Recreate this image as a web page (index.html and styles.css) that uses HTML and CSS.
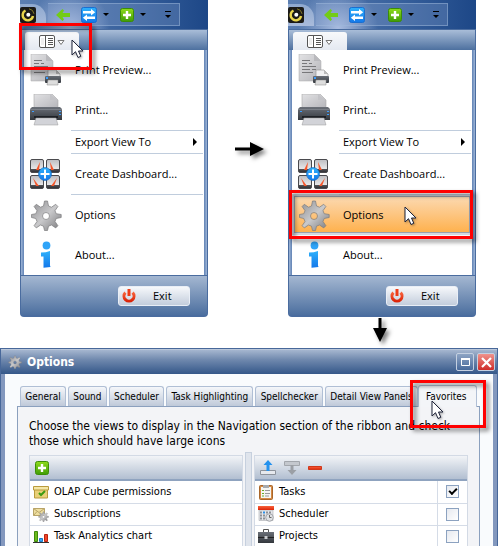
FILE: index.html
```html
<!DOCTYPE html>
<html lang="en">
<head>
  <meta charset="UTF-8">
  <meta name="viewport" content="width=device-width, initial-scale=1.0">
  <title>Options - Favorites</title>
  <link rel="stylesheet" href="styles.css">
</head>
<body>
  <svg class="sprite" aria-hidden="true">
    <defs>
      <linearGradient id="gPaper" x1="0" y1="0" x2="1" y2="1"><stop offset="0" stop-color="#e2e2e4"/><stop offset="1" stop-color="#b4b4b9"/></linearGradient>
      <linearGradient id="gDark" x1="0" y1="0" x2="0" y2="1"><stop offset="0" stop-color="#6b7078"/><stop offset="1" stop-color="#33373d"/></linearGradient>
      <linearGradient id="gGear" x1="0" y1="0" x2="1" y2="1"><stop offset="0" stop-color="#8e8e91"/><stop offset=".5" stop-color="#c9c9cb"/><stop offset="1" stop-color="#77777a"/></linearGradient>
      <linearGradient id="gBlue" x1="0" y1="0" x2="0" y2="1"><stop offset="0" stop-color="#2fb1fb"/><stop offset="1" stop-color="#1478ea"/></linearGradient>
      <linearGradient id="gGreen" x1="0" y1="0" x2="0" y2="1"><stop offset="0" stop-color="#8fdc1c"/><stop offset="1" stop-color="#3f9c06"/></linearGradient>
      <linearGradient id="gRed" x1="0" y1="0" x2="0" y2="1"><stop offset="0" stop-color="#f8633c"/><stop offset="1" stop-color="#dc2408"/></linearGradient>
      <linearGradient id="gTile" x1="0" y1="0" x2="0" y2="1"><stop offset="0" stop-color="#bdbdc1"/><stop offset=".7" stop-color="#e6e6e8"/><stop offset=".72" stop-color="#55555a"/><stop offset="1" stop-color="#2c2c30"/></linearGradient>
    </defs>
    <symbol id="logo" viewBox="0 0 16 16">
      <rect width="16" height="16" rx="2" fill="#1b1a17"/>
      <path d="M5.500 3.500A5.200 5.200 0 1 0 13 9" fill="none" stroke="#e8d44a" stroke-width="2.400"/>
      <circle cx="8.300" cy="7.800" r="2" fill="#fff"/>
      <path d="M9 1.800a6 6 0 0 1 5 5" fill="none" stroke="#857a2a" stroke-width="1"/>
    </symbol>
    <symbol id="back" viewBox="0 0 14 12">
      <path d="M0 6 6.500 0l1.500 1.500L6.500 4H14v4H6.500L8 10.500 6.500 12z" fill="#72cc16"/>
    </symbol>
    <symbol id="refresh" viewBox="0 0 16 16">
      <rect x=".5" y=".5" width="15" height="15" rx="2" fill="url(#gBlue)" stroke="#1a6fd0"/>
      <path d="M2 4h8V2l4.200 3.300L10 8.500V6.500H2zM14 9.500H6V7.500L1.800 10.800 6 14v-2h8z" fill="#fff"/>
    </symbol>
    <symbol id="plus" viewBox="0 0 14 14">
      <rect x=".5" y=".5" width="13" height="13" rx="2" fill="url(#gGreen)" stroke="#3c8d08"/>
      <path d="M5.800 3h2.400v2.800H11v2.400H8.200V11H5.800V8.200H3V5.800h2.800z" fill="#fff"/>
    </symbol>
    <symbol id="view" viewBox="0 0 26 13">
      <rect x=".5" y=".5" width="15" height="12" rx="1.500" fill="#fff" stroke="#555"/>
      <path d="M6.500 1v11" stroke="#555"/>
      <path d="M9 3.500h5M9 5.500h5M9 7.500h5M9 9.500h5" stroke="#555"/>
      <path d="M2 3h3v7H2z" fill="#eee"/>
      <path d="M19 5.500h6L22 9.500z" fill="#fff" stroke="#777"/>
    </symbol>
    <symbol id="preview" viewBox="0 0 32 32">
      <path d="M1 0h15l7 7v20H1z" fill="url(#gPaper)" stroke="#aaa" stroke-width=".5"/>
      <path d="M16 0v7h7z" fill="#b9b9bd"/>
      <path d="M4 6.500h8M4 9.500h5m2 0h3M4 12.500h14M4 15.500h8m2 0h4M4 18.500h11" stroke="#77777a"/>
      <path d="M18 16h8l4 4v5H18z" fill="#f1f1f2" stroke="#999" stroke-width=".7"/>
      <path d="M26 16v4h4z" fill="#bbb"/>
      <rect x="15" y="22" width="16" height="7" rx="1" fill="url(#gDark)"/>
      <path d="M16 24h2" stroke="#3d9eff" stroke-width="2"/>
      <path d="M18 26h10v5H17z" fill="#ddd" stroke="#888" stroke-width=".5"/>
    </symbol>
    <symbol id="print" viewBox="0 0 32 32">
      <path d="M4 0h18l6 6v9H4z" fill="url(#gPaper)" stroke="#aaa" stroke-width=".6"/>
      <path d="M20 0v6h7z" fill="#c3c3c7"/>
      <path d="M2 13h28l2 2v11H0V15z" fill="url(#gDark)"/>
      <path d="M0 15.500h32" stroke="#7b8088"/>
      <path d="M29 17.500h2M29 20.500h2M2 17.500h2" stroke="#3d9eff"/>
      <path d="M4 22h24v2H4z" fill="#1e2126"/>
      <path d="M6 24h20l2 7H4z" fill="#d2d3d8" stroke="#999" stroke-width=".5"/>
    </symbol>
    <symbol id="dashboard" viewBox="0 0 32 32">
      <g fill="url(#gTile)" stroke="#4a4a4e">
        <rect x=".5" y="1.500" width="13" height="13" rx="1.500"/>
        <rect x="16.500" y="1.500" width="13" height="13" rx="1.500"/>
        <rect x=".5" y="17.500" width="13" height="13" rx="1.500"/>
        <rect x="16.500" y="17.500" width="13" height="13" rx="1.500"/>
      </g>
      <path d="M6 12 10 4 9 12zM24 12 20 4 21 12zM6 28 3 20 9 28zM24 28 27 20 21 28z" fill="#f4572c"/>
      <circle cx="15" cy="16" r="6.500" fill="url(#gBlue)" stroke="#1467bd" stroke-width=".6"/>
      <path d="M15 11.500v9M10.500 16h9" stroke="#fff" stroke-width="2"/>
    </symbol>
    <symbol id="gear" viewBox="0 0 32 32">
      <path fill-rule="evenodd" fill="url(#gGear)" stroke="#7b7b7d" stroke-width=".7" d="M14.500 2h3l1 5 3 1.200 4.200-2.900 2.200 2.200-2.900 4.200 1.200 3 5 .8v3l-5 1-1.200 3 2.900 4.200-2.200 2.200-4.200-2.900-3 1.200-1 4.300h-3l-1-4.300-3-1.200-4.200 2.900-2.200-2.200L7 22.500l-1.200-3-4.300-1v-3l4.300-.8 1.200-3-2.900-4.200 2.200-2.200 4.200 2.900 3-1.200zM16 13.500a3.500 3.500 0 1 0 0 7a3.500 3.500 0 1 0 0-7z"/>
    </symbol>
    <symbol id="info" viewBox="0 0 32 32">
      <circle cx="16.500" cy="6.500" r="3.900" fill="#2fa4f8"/>
      <path d="M11 13.500q5 0 9-1.500v14.500l.5 1.500-7 .8V17.500H11z" fill="url(#gBlue)"/>
    </symbol>
    <symbol id="power" viewBox="0 0 14 14">
      <path d="M3.400 3.600a5 5 0 1 0 7.200 0" fill="none" stroke="url(#gRed)" stroke-width="3"/>
      <path d="M5.500 0h3v7h-3z" fill="#ee3c18"/>
    </symbol>
    <symbol id="pointer" viewBox="0 0 14 20">
      <path d="M1 1v15l3.500-3.300L7 18.500l2.800-1.200L7.500 12H12z" fill="#fff" stroke="#1d2238"/>
    </symbol>
    <symbol id="box" viewBox="0 0 16 16">
      <path d="M1.500 5h13v9h-13z" fill="#e9d078" stroke="#b99a3c"/>
      <path d="M.5 2.500h15V6H.5z" fill="#f4e6a6" stroke="#b99a3c"/>
      <path d="m6 9 2 2 4-4" fill="none" stroke="#3c9a12" stroke-width="2"/>
    </symbol>
    <symbol id="mail" viewBox="0 0 16 16">
      <path d="M.5 2.500h11v7H.5z" fill="#efdf9f" stroke="#b8a468"/>
      <path d="m.5 2.500 5.500 4 5.500-4M.5 9.500 4 5.500" fill="none" stroke="#b8a468"/>
      <use href="#gear" x="5" y="5" width="11" height="11"/>
    </symbol>
    <symbol id="chart" viewBox="0 0 16 16">
      <path d="M1.500 3.500h3v10h-3z" fill="#6cba1c" stroke="#3f8a0c"/>
      <path d="M6.500 10.500h3v3h-3z" fill="#35a6f5" stroke="#1b79c9"/>
      <path d="M11.500 6.500h3v7h-3z" fill="#f0452a" stroke="#b8230e"/>
      <path d="M0 14.500h16" stroke="#333"/>
    </symbol>
    <symbol id="up" viewBox="0 0 16 16">
      <path d="M.5 10.500h15v4H.5z" fill="#e6e9ee" stroke="#8d939c"/>
      <path d="M8 0 3.500 5h3v6h3V5h3z" fill="#2492ee"/>
    </symbol>
    <symbol id="down" viewBox="0 0 16 16">
      <path d="M.5 1.500h15v4H.5z" fill="#c4c8ce" stroke="#a2a6ac"/>
      <path d="M6.500 5h3v5h3L8 15 3.500 10h3z" fill="#9b9fa5"/>
    </symbol>
    <symbol id="minus" viewBox="0 0 14 14">
      <path d="M.5 5.500h13v3H.5z" fill="url(#gRed)" stroke="#d0381a"/>
    </symbol>
    <symbol id="tasks" viewBox="0 0 16 16">
      <rect x="1.500" y="1.500" width="13" height="14" rx="1" fill="#d48a45" stroke="#a9662a"/>
      <path d="M3 3h10v11H3z" fill="#f5f5f2"/>
      <path d="M5 1h6v3H5z" fill="#a7a9ac"/>
      <path d="M4 6.500h2M4 9.500h2M4 12h2" stroke="#67ae28"/>
      <path d="M7 6.500h5M7 9.500h5M7 12h4" stroke="#999"/>
    </symbol>
    <symbol id="calendar" viewBox="0 0 16 16">
      <path d="M1 4h14v10.500H1z" fill="#e4e6ea" stroke="#a8abb0" stroke-width=".6"/>
      <path d="M0 0h16v4H0z" fill="url(#gRed)"/>
      <path d="M2 6.500h2m4 0h2m1 0h2M2 9.500h2m1 0h2M2 12.500h2m1 0h2" stroke="#8c9096" stroke-width="2"/>
      <path d="M5 5.500h2v2H5z" fill="#2a90ea"/>
      <circle cx="11.500" cy="11.500" r="3.800" fill="#dfe1e4" stroke="#a2a5aa"/>
      <path d="M11.500 9v2.500h2" fill="none" stroke="#666"/>
    </symbol>
    <symbol id="case" viewBox="0 0 16 16">
      <path d="M5.500 4V1.500h5V4" fill="none" stroke="#555"/>
      <path d="M0 4h16v11H0z" fill="url(#gDark)"/>
      <path d="M0 9.500h16" stroke="#222"/>
      <path d="M6.500 8h3v3h-3z" fill="#c9cbce"/>
    </symbol>
  </svg>

  <main class="steps">
    <section class="menu-window">
      <div class="quick-bar">
        <span class="app-logo"><svg width="16" height="16"><use href="#logo"/></svg></span>
        <div class="quick-tools">
          <button aria-label="Back"><svg width="14" height="12"><use href="#back"/></svg></button>
          <button class="split" aria-label="Refresh"><svg width="16" height="16"><use href="#refresh"/></svg><i class="caret"></i></button>
          <button class="split" aria-label="New"><svg width="14" height="14"><use href="#plus"/></svg><i class="caret"></i></button>
          <button class="more" aria-label="More"><i class="caret"></i></button>
        </div>
      </div>
      <div class="menu-frame">
        <div class="ribbon">
          <button class="view-tab" aria-label="Application menu"><svg width="26" height="13"><use href="#view"/></svg></button>
        </div>
        <nav class="menu">
          <button class="item"><svg width="32" height="32"><use href="#preview"/></svg>Print Preview...</button>
          <button class="item"><svg width="32" height="32"><use href="#print"/></svg>Print...</button>
          <button class="item short">Export View To<i class="caret right"></i></button>
          <button class="item"><svg width="32" height="32"><use href="#dashboard"/></svg>Create Dashboard...</button>
          <button class="item ruled"><svg width="32" height="32"><use href="#gear"/></svg>Options</button>
          <button class="item"><svg width="32" height="32"><use href="#info"/></svg>About...</button>
        </nav>
        <div class="menu-footer">
          <button class="exit"><svg width="14" height="14"><use href="#power"/></svg>Exit</button>
        </div>
      </div>
      <span class="mark mark-tab"></span>
      <svg class="pointer pointer-tab" width="14" height="20"><use href="#pointer"/></svg>
    </section>

    <svg class="arrow" width="30" height="16" viewBox="0 0 30 16"><path d="M0 6.500h15V1l14 7-14 7V9.500H0z"/></svg>

    <section class="menu-window">
      <div class="quick-bar">
        <span class="app-logo"><svg width="16" height="16"><use href="#logo"/></svg></span>
        <div class="quick-tools">
          <button aria-label="Back"><svg width="14" height="12"><use href="#back"/></svg></button>
          <button class="split" aria-label="Refresh"><svg width="16" height="16"><use href="#refresh"/></svg><i class="caret"></i></button>
          <button class="split" aria-label="New"><svg width="14" height="14"><use href="#plus"/></svg><i class="caret"></i></button>
          <button class="more" aria-label="More"><i class="caret"></i></button>
        </div>
      </div>
      <div class="menu-frame">
        <div class="ribbon">
          <button class="view-tab" aria-label="Application menu"><svg width="26" height="13"><use href="#view"/></svg></button>
        </div>
        <nav class="menu">
          <button class="item"><svg width="32" height="32"><use href="#preview"/></svg>Print Preview...</button>
          <button class="item"><svg width="32" height="32"><use href="#print"/></svg>Print...</button>
          <button class="item short">Export View To<i class="caret right"></i></button>
          <button class="item"><svg width="32" height="32"><use href="#dashboard"/></svg>Create Dashboard...</button>
          <button class="item ruled active"><svg width="32" height="32"><use href="#gear"/></svg>Options</button>
          <button class="item"><svg width="32" height="32"><use href="#info"/></svg>About...</button>
        </nav>
        <div class="menu-footer">
          <button class="exit"><svg width="14" height="14"><use href="#power"/></svg>Exit</button>
        </div>
      </div>
      <span class="mark mark-item"></span>
      <svg class="pointer pointer-item" width="14" height="20"><use href="#pointer"/></svg>
    </section>
  </main>

  <div class="next">
    <svg class="arrow" width="16" height="26" viewBox="0 0 16 26"><path d="M6.500 1v10H1l7 14 7-14H9.500V1z"/></svg>
  </div>

  <section class="dialog">
    <header class="dialog-title">
      <svg width="14" height="14"><use href="#gear"/></svg>
      <h1>Options</h1>
      <button class="win-btn" aria-label="Maximize"><svg width="11" height="11" viewBox="0 0 11 11"><path d="M1.500 2.500h8v6h-8z" fill="none" stroke="#fff"/><path d="M1 2h9" stroke="#fff" stroke-width="2"/></svg></button>
      <button class="win-btn close" aria-label="Close"><svg width="11" height="11" viewBox="0 0 11 11"><path d="m1 1 9 9m0-9-9 9" stroke="#fff" stroke-width="2.200"/></svg></button>
    </header>
    <div class="dialog-body">
      <div class="tabs" role="tablist">
        <button class="tab" role="tab">General</button>
        <button class="tab" role="tab">Sound</button>
        <button class="tab" role="tab">Scheduler</button>
        <button class="tab" role="tab">Task Highlighting</button>
        <button class="tab" role="tab">Spellchecker</button>
        <button class="tab" role="tab">Detail View Panels</button>
        <button class="tab selected" role="tab" aria-selected="true">Favorites
          <span class="mark mark-favorites"></span>
          <svg class="pointer pointer-favorites" width="14" height="20"><use href="#pointer"/></svg>
        </button>
      </div>
      <div class="tab-page">
        <p class="hint">Choose the views to display in the Navigation section of the ribbon and check those which should have large icons</p>
        <div class="lists">
          <div class="list">
            <div class="list-tools">
              <button aria-label="Add"><svg width="14" height="14"><use href="#plus"/></svg></button>
            </div>
            <table>
              <tr><td class="name"><svg width="16" height="16"><use href="#box"/></svg>OLAP Cube permissions</td></tr>
              <tr><td class="name"><svg width="16" height="16"><use href="#mail"/></svg>Subscriptions</td></tr>
              <tr><td class="name"><svg width="16" height="16"><use href="#chart"/></svg>Task Analytics chart</td></tr>
            </table>
          </div>
          <div class="splitter"></div>
          <div class="list">
            <div class="list-tools">
              <button aria-label="Move up"><svg width="16" height="16"><use href="#up"/></svg></button>
              <button aria-label="Move down"><svg width="16" height="16"><use href="#down"/></svg></button>
              <button aria-label="Remove"><svg width="14" height="14"><use href="#minus"/></svg></button>
            </div>
            <table>
              <tr><td class="name"><svg width="16" height="16"><use href="#tasks"/></svg><label for="tasksLarge">Tasks</label></td><td class="check"><input type="checkbox" id="tasksLarge" checked></td></tr>
              <tr><td class="name"><svg width="16" height="16"><use href="#calendar"/></svg><label for="schedulerLarge">Scheduler</label></td><td class="check"><input type="checkbox" id="schedulerLarge"></td></tr>
              <tr><td class="name"><svg width="16" height="16"><use href="#case"/></svg><label for="projectsLarge">Projects</label></td><td class="check"><input type="checkbox" id="projectsLarge"></td></tr>
            </table>
          </div>
        </div>
      </div>
    </div>
  </section>
</body>
</html>
```
FILE: styles.css
```css
* {
  box-sizing: border-box;
}
body {
  margin: 0;
  height: 100vh;
  overflow: hidden;
  display: flex;
  flex-direction: column;
  background: #fff;
  color: #000;
  font: 11px/16px "DejaVu Sans Condensed", "DejaVu Sans", sans-serif;
}
button {
  margin: 0;
  padding: 0;
  border: 0;
  background: none;
  color: inherit;
  font: inherit;
}
svg {
  display: block;
  flex: none;
}
.sprite {
  position: absolute;
  width: 0;
  height: 0;
}

/* application menus */
.steps {
  display: grid;
  grid-template-columns: 1fr 80px 1fr;
  flex: none;
  padding: 0 22px 0 20px;
  font: 11px/16px "Open Sans", "Noto Sans", sans-serif;
}
.steps > .arrow {
  align-self: center;
  margin-left: 27px;
  margin-top: -20px;
}
.arrow {
  overflow: visible;
  filter: drop-shadow(3px 3px 2px rgba(0, 0, 0, 0.5));
}
.menu-window {
  position: relative;
}
.quick-bar {
  display: flex;
  align-items: center;
  height: 29px;
  background: radial-gradient(circle at 50px 28px, #a9bce0 0, rgba(120, 150, 195, 0) 40px), linear-gradient(90deg, #5c7fb2, #37609c 60%, #1d4787);
}
.app-logo {
  display: flex;
  align-items: center;
  width: 26px;
  height: 22px;
  background: linear-gradient(#8fa9cf, #a9bbdb);
  border-radius: 0 14px 0 0;
}
.quick-tools {
  display: flex;
  align-items: center;
  flex: 1;
  height: 23px;
  margin: 0 28px 0 2px;
  padding-left: 8px;
  border: 1px solid rgba(160, 185, 220, 0.5);
  border-left: 0;
  background: rgba(150, 175, 215, 0.25);
}
.split {
  display: flex;
  align-items: center;
  gap: 6px;
  margin-left: 11px;
}
.caret {
  border: 3px solid transparent;
  border-top: 3px solid #000;
  border-bottom: 0;
}
.more {
  margin: 0 8px 0 auto;
  padding-top: 3px;
  border-top: 1px solid #000;
}
.more .caret {
  display: block;
}
.caret.right {
  margin-left: auto;
  border: 4px solid transparent;
  border-left: 4px solid #000;
  border-right: 0;
}
.menu-frame {
  padding: 0 4px;
  border: 1px solid #4a6c9f;
  border-width: 1px 1px 2px;
  border-radius: 0 0 4px 4px;
  background: linear-gradient(90deg, #9db5d8, #6283b4 3px, transparent 4px), linear-gradient(270deg, #9db5d8, #6283b4 3px, transparent 4px), #7f9bc4;
}
.ribbon {
  height: 20px;
  margin: 0 -4px;
  padding: 2px 4px 0;
  background: linear-gradient(#a9bdd8, #4d709f);
}
.view-tab {
  display: flex;
  align-items: center;
  justify-content: center;
  width: 54px;
  height: 18px;
  background: linear-gradient(#f8f9fb, #e4e9f1);
  border-radius: 3px 3px 0 0;
}
.menu {
  margin: 0 -1px;
  background: #fff;
}
.item {
  display: flex;
  align-items: center;
  gap: 13px;
  position: relative;
  width: 100%;
  height: 40px;
  padding: 0 7px 0 6px;
  text-align: left;
}
.item.short {
  height: 24px;
  padding-left: 51px;
}
.item.ruled {
  height: 41px;
  padding-top: 1px;
}
.item.short::before,
.item.short::after,
.item.ruled::before {
  content: "";
  position: absolute;
  top: 0;
  left: 47px;
  right: 1px;
  height: 1px;
  background: #c0cddd;
}
.item.short::after {
  top: auto;
  bottom: 0;
}
.item.active {
  background: linear-gradient(#fbdcb8, #fdc580 50%, #ffae45);
  box-shadow: inset 0 0 0 2px #d3d8e0, inset 0 0 0 3px #98a1ad;
}
.menu-footer {
  display: flex;
  align-items: center;
  justify-content: flex-end;
  height: 40px;
  margin: 0 -4px;
  padding-right: 17px;
  border-top: 1px solid #4a6c9f;
  background: linear-gradient(#a4b7d1, #4c6f9f);
}
.exit {
  display: flex;
  align-items: center;
  gap: 17px;
  width: 72px;
  height: 20px;
  padding-left: 3px;
  border: 1px solid #e9eef6;
  border-radius: 3px;
  background: linear-gradient(#f6f8fb, #c3cddc);
}
.next {
  flex: none;
  height: 31px;
  padding-right: 110px;
  display: flex;
  justify-content: flex-end;
}

/* red highlights and mouse pointers */
.mark {
  position: absolute;
  border: 3px solid #f00;
  filter: drop-shadow(3px 3px 2px rgba(0, 0, 0, 0.5));
  pointer-events: none;
}
.mark-tab {
  top: 23px;
  left: -1px;
  width: 73px;
  height: 47px;
}
.mark-item {
  top: 190px;
  left: 1px;
  right: 3px;
  height: 49px;
}
.mark-favorites {
  top: -6px;
  left: -9px;
  right: -10px;
  height: 48px;
}
.pointer {
  position: absolute;
  filter: drop-shadow(1px 1px 1px rgba(0, 0, 0, 0.3));
}
.pointer-tab {
  top: 39px;
  left: 51px;
}
.pointer-item {
  top: 206px;
  left: 116px;
}
.pointer-favorites {
  top: 14px;
  left: 12px;
}

/* options dialog */
.dialog {
  display: flex;
  flex-direction: column;
  flex: 1;
  min-height: 0;
  border: 1px solid #48689a;
  border-bottom: 0;
}
.dialog-title {
  display: flex;
  align-items: center;
  gap: 3px;
  flex: none;
  height: 25px;
  padding: 0 2px 0 7px;
  color: #fff;
  background: linear-gradient(#a5b6cf, #7089ae 40%, #345789);
  border-top: 1px solid #bac7da;
}
.dialog-title h1 {
  flex: 1;
  margin: 0;
  padding-left: 2px;
  font-size: 12px;
}
.win-btn {
  display: flex;
  align-items: center;
  justify-content: center;
  width: 18px;
  height: 18px;
  border: 1px solid #c4d0e1;
  border-radius: 2px;
  background: linear-gradient(#8ea4c4, #486a9b);
}
.win-btn.close {
  background: linear-gradient(#f0938c, #cf2c28);
}
.dialog-body {
  display: flex;
  flex-direction: column;
  flex: 1;
  min-height: 0;
  padding: 12px 13px 0 12px;
  border: solid #8398be;
  border-width: 0 4px;
  background: #f9fbfd;
}
.tabs {
  display: flex;
  align-items: flex-end;
  gap: 2px;
  flex: none;
  padding: 0 3px;
  font-size: 10px;
}
.tab {
  flex: 1 0 auto;
  height: 20px;
  padding: 0 3px;
  border: 1px solid #b0bfd5;
  border-bottom: 0;
  border-radius: 3px 3px 0 0;
  background: linear-gradient(#f5f7fa, #bfc9d9);
  white-space: nowrap;
}
.tab.selected {
  position: relative;
  z-index: 1;
  height: 22px;
  margin: -1px 0 -1px -2px;
  padding: 0 7px;
  background: #f3f5f8;
  text-align: left;
}
.tab-page {
  flex: 1;
  padding: 12px 11px 0;
  border: 1px solid #8ba0be;
  border-bottom: 0;
  background: #f3f4f7;
}
.hint {
  margin: 0 0 6px;
  font-size: 12px;
  line-height: 15px;
}
.lists {
  display: flex;
  gap: 2px;
}
.list {
  flex: 1;
  border: 1px solid #d3dae5;
  border-bottom: 0;
  background: #fff;
}
.splitter {
  width: 7px;
  margin-top: -3px;
  border: 1px solid #c6d0de;
  background: #dfe4ec;
}
.list-tools {
  display: flex;
  align-items: center;
  gap: 8px;
  height: 25px;
  padding: 0 5px;
  border-bottom: 2px solid #8fa3bf;
  background: linear-gradient(#f2f4f7, #b2bfd1);
}
.list table {
  width: 100%;
  border-collapse: collapse;
}
.list td {
  height: 22px;
  padding: 0;
  border-bottom: 1px solid #d5dce7;
}
.list .name {
  padding-left: 3px;
}
.name svg {
  float: left;
  margin-right: 5px;
}
.list .check {
  width: 30px;
  border-left: 1px solid #d5dce7;
}
.check input {
  appearance: none;
  display: block;
  width: 13px;
  height: 13px;
  margin: 0 auto;
  border: 1px solid #8ca2c0;
  background: linear-gradient(135deg, #e6e9ef, #fff);
}
.check input:checked::before {
  content: "";
  display: block;
  box-sizing: border-box;
  width: 8px;
  height: 5px;
  margin: 2px 0 0 2px;
  border: solid #000;
  border-width: 0 0 2px 2px;
  transform: rotate(-45deg);
}
```
